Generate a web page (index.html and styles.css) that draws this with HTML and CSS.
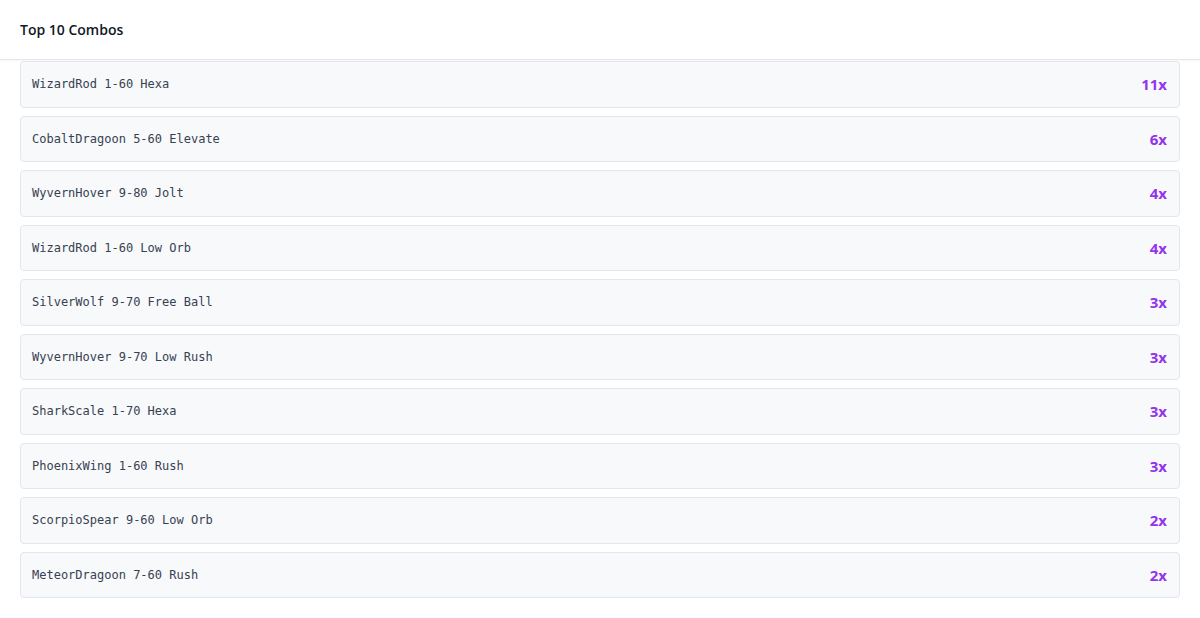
FILE: index.html
```html
<!DOCTYPE html>
<html lang="en">
<head>
    <meta charset="UTF-8">
    <meta name="viewport" content="width=device-width, initial-scale=1.0">
    <title>Top 10 Combos</title>
    <link rel="stylesheet" href="styles.css">
</head>
<body>
    <div class="panel">
        <div class="panel-header">
            <h3>Top 10 Combos</h3>
        </div>
        <ul class="combo-list">
            <li class="combo"><span class="combo-name">WizardRod 1-60 Hexa</span><span class="combo-count">11x</span></li>
            <li class="combo"><span class="combo-name">CobaltDragoon 5-60 Elevate</span><span class="combo-count">6x</span></li>
            <li class="combo"><span class="combo-name">WyvernHover 9-80 Jolt</span><span class="combo-count">4x</span></li>
            <li class="combo"><span class="combo-name">WizardRod 1-60 Low Orb</span><span class="combo-count">4x</span></li>
            <li class="combo"><span class="combo-name">SilverWolf 9-70 Free Ball</span><span class="combo-count">3x</span></li>
            <li class="combo"><span class="combo-name">WyvernHover 9-70 Low Rush</span><span class="combo-count">3x</span></li>
            <li class="combo"><span class="combo-name">SharkScale 1-70 Hexa</span><span class="combo-count">3x</span></li>
            <li class="combo"><span class="combo-name">PhoenixWing 1-60 Rush</span><span class="combo-count">3x</span></li>
            <li class="combo"><span class="combo-name">ScorpioSpear 9-60 Low Orb</span><span class="combo-count">2x</span></li>
            <li class="combo"><span class="combo-name">MeteorDragoon 7-60 Rush</span><span class="combo-count">2x</span></li>
        </ul>
    </div>
</body>
</html>
```

FILE: styles.css
```css
* { box-sizing: border-box; }
html, body { margin: 0; padding: 0; }
body {
    background: #fff;
    font-family: "Open Sans", "Noto Sans", sans-serif;
    color: #111827;
}
.panel-header {
    height: 60px;
    padding: 0 20px;
    display: flex;
    align-items: center;
    border-bottom: 1px solid #e5e7eb;
    box-shadow: 0 1px 2px rgba(0, 0, 0, 0.04);
}
.panel-header h3 {
    margin: 0;
    font-size: 14px;
    font-weight: 600;
}
.combo-list {
    list-style: none;
    margin: 0;
    padding: 1px 20px 20px;
    display: flex;
    flex-direction: column;
    gap: 8px;
}
.combo {
    display: flex;
    justify-content: space-between;
    align-items: center;
    padding: 11px 12px 11px 11px;
    background: #f8f9fb;
    border: 1px solid #e2e6ee;
    border-radius: 4px;
}
.combo-name {
    font-family: "DejaVu Sans Mono", monospace;
    font-size: 12px;
    color: #374151;
}
.combo-count {
    font-size: 15px;
    line-height: 22.5px;
    font-weight: 700;
    color: #9333ea;
}
```
